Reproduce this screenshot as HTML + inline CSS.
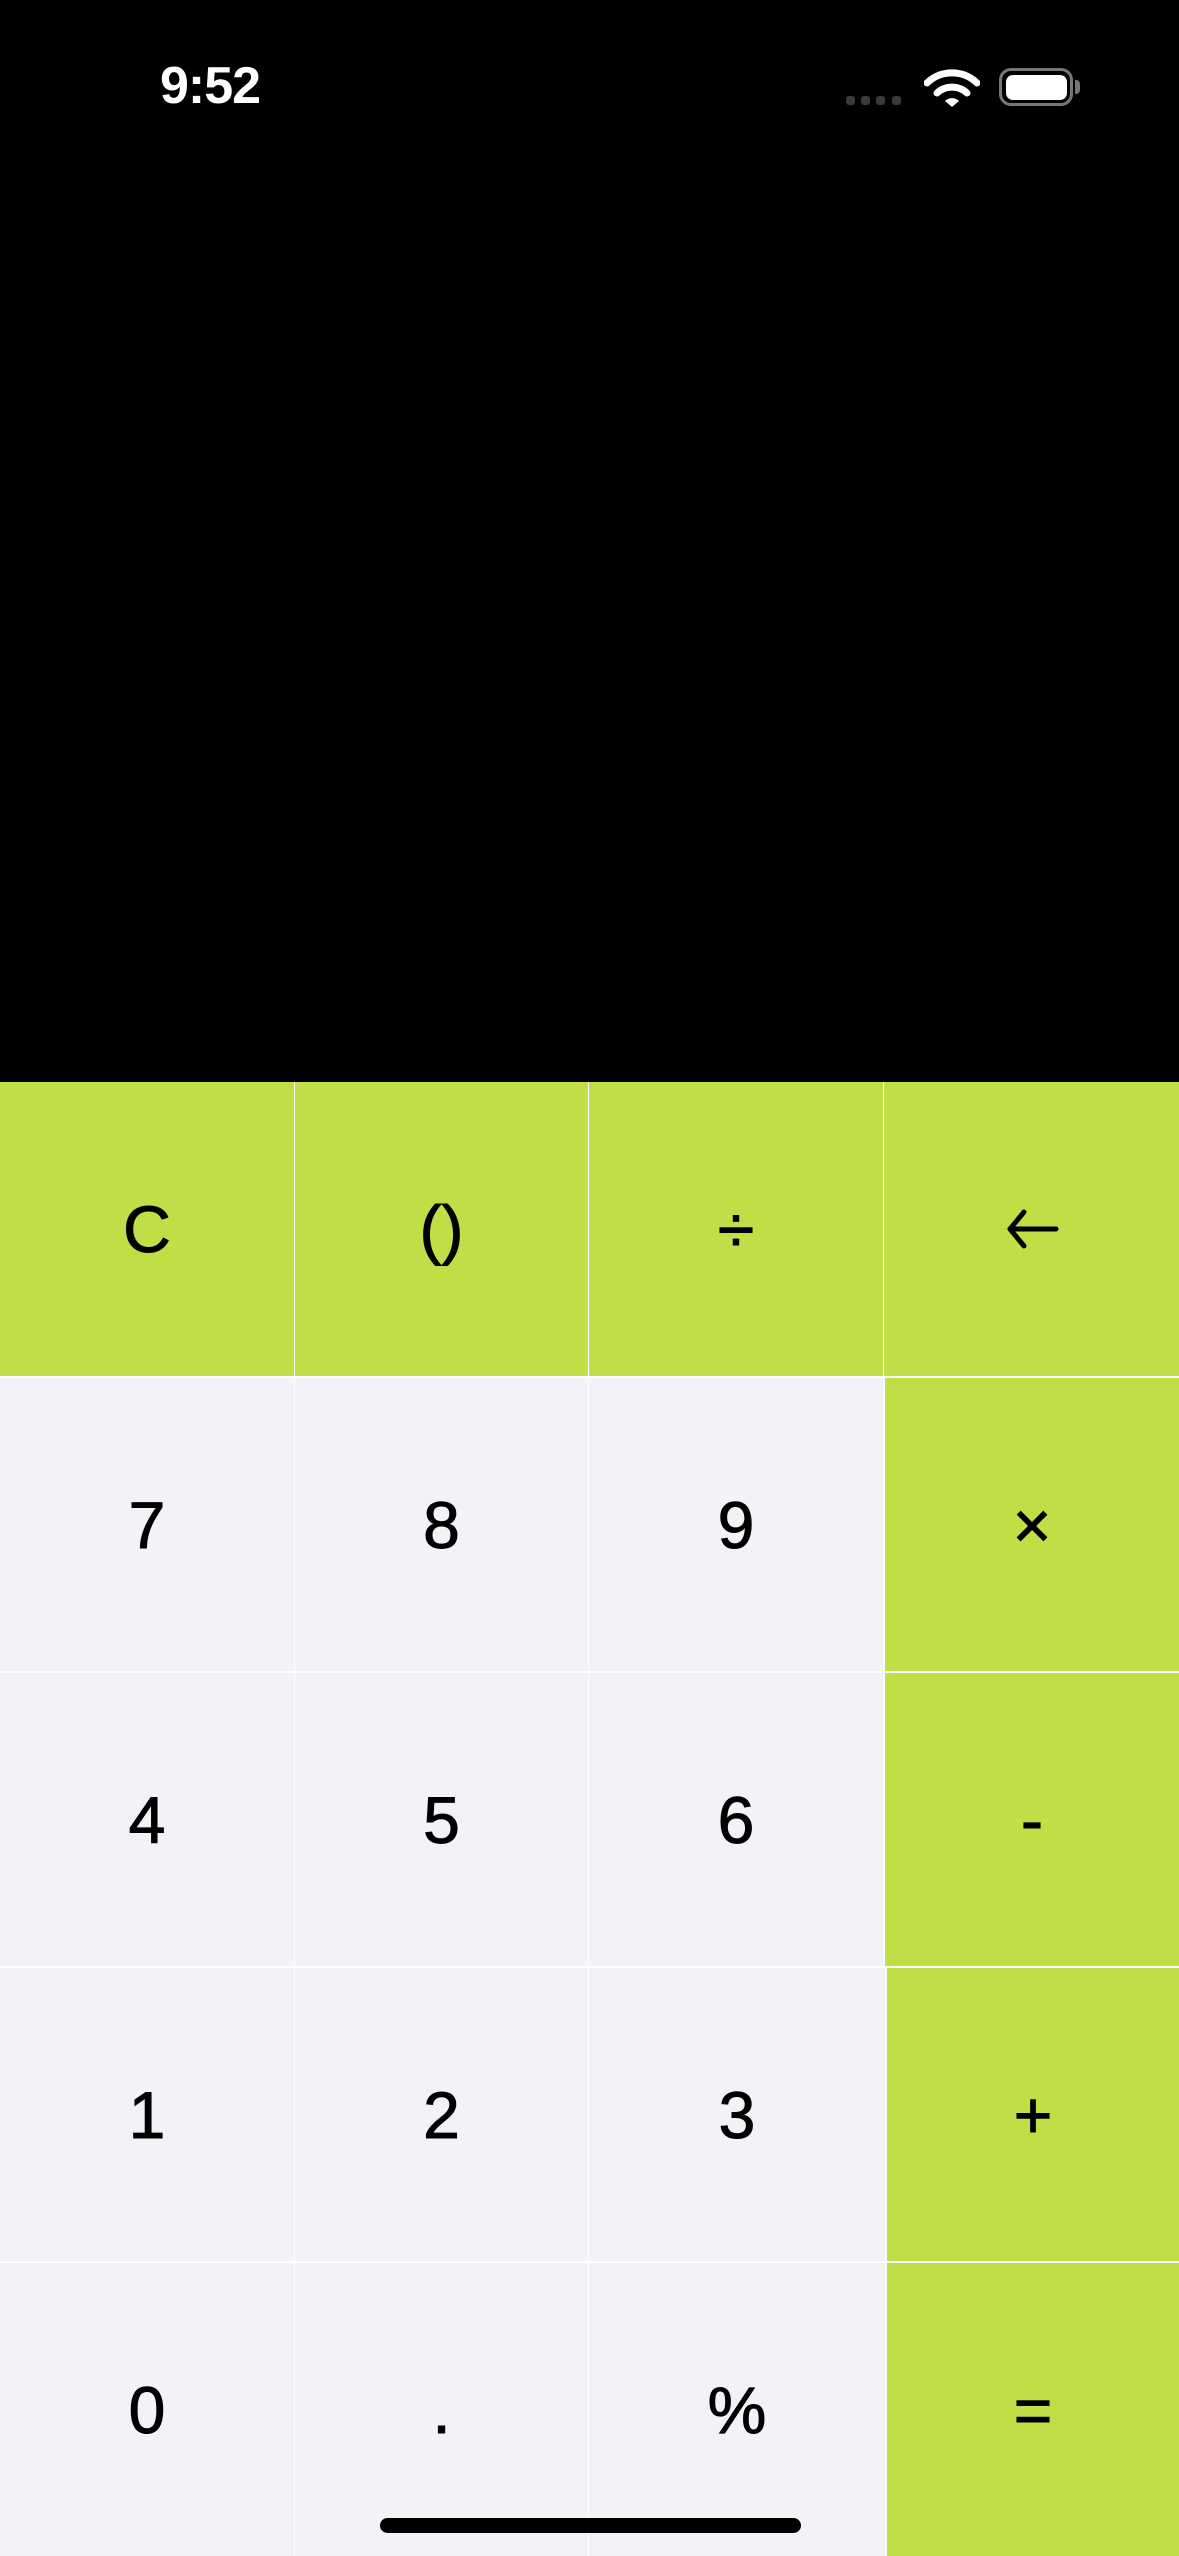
<!DOCTYPE html>
<html><head><meta charset="utf-8"><style>
*{margin:0;padding:0;box-sizing:border-box}
body{width:1179px;height:2556px;background:#000;position:relative;overflow:hidden;font-family:"Liberation Sans",Helvetica,Arial,sans-serif}
.k{position:absolute;display:flex;align-items:center;justify-content:center;font-size:66px;color:#000;-webkit-text-stroke:1px #000}
.g{background:#c0df46}
.w{background:#f2f2f7}
.time{position:absolute;left:160px;top:56px;color:#fff;font-size:52px;font-weight:bold;letter-spacing:-1px}
.dot{position:absolute;top:96px;width:9px;height:9px;border-radius:3px;background:#3a3a3a}
</style></head><body>
<div class="time">9:52</div>
<div class="dot" style="left:846px"></div>
<div class="dot" style="left:861px"></div>
<div class="dot" style="left:876px"></div>
<div class="dot" style="left:892px"></div>
<svg style="position:absolute;left:924px;top:66px" width="56" height="42" viewBox="0 0 56 42">
<path d="M3 17 A36 36 0 0 1 53 17" stroke="#fff" stroke-width="7" fill="none" stroke-linecap="round"/>
<path d="M13 27 A22 22 0 0 1 43 27" stroke="#fff" stroke-width="7" fill="none" stroke-linecap="round"/>
<path d="M21 35 L28 41 L35 35 A10 10 0 0 0 21 35Z" fill="#fff"/>
</svg>
<div style="position:absolute;left:999px;top:68px;width:74px;height:38px;border:3px solid #777;border-radius:12px"></div>
<div style="position:absolute;left:1006px;top:75px;width:61px;height:25px;background:#fff;border-radius:7px"></div>
<div style="position:absolute;left:1075px;top:80px;width:5px;height:14px;background:#777;border-radius:0 4px 4px 0"></div>

<div style="position:absolute;left:0;top:1082px;width:1179px;height:1474px;background:#fff"></div>
<div class="k g" style="left:0;top:1082px;width:294px;height:294px">C</div>
<div class="k g" style="left:295px;top:1082px;width:293px;height:294px">()</div>
<div class="k g" style="left:589px;top:1082px;width:294px;height:294px">÷</div>
<div class="k g" style="left:884px;top:1082px;width:295px;height:294px"><svg width="56" height="44" viewBox="0 0 56 44"><path d="M52 22H6M20 5L6 22L20 39" stroke="#000" stroke-width="5" fill="none" stroke-linecap="round" stroke-linejoin="round"/></svg></div>
<div class="k w" style="left:0;top:1378px;width:294px;height:293px">7</div>
<div class="k w" style="left:295px;top:1378px;width:293px;height:293px">8</div>
<div class="k w" style="left:589px;top:1378px;width:294px;height:293px">9</div>
<div class="k g" style="left:885px;top:1378px;width:294px;height:293px">×</div>
<div class="k w" style="left:0;top:1673px;width:294px;height:293px">4</div>
<div class="k w" style="left:295px;top:1673px;width:293px;height:293px">5</div>
<div class="k w" style="left:589px;top:1673px;width:294px;height:293px">6</div>
<div class="k g" style="left:885px;top:1673px;width:294px;height:293px">-</div>
<div class="k w" style="left:0;top:1968px;width:294px;height:293px">1</div>
<div class="k w" style="left:295px;top:1968px;width:293px;height:293px">2</div>
<div class="k w" style="left:589px;top:1968px;width:296px;height:293px">3</div>
<div class="k g" style="left:887px;top:1968px;width:292px;height:293px">+</div>
<div class="k w" style="left:0;top:2263px;width:294px;height:293px">0</div>
<div class="k w" style="left:295px;top:2263px;width:293px;height:293px">.</div>
<div class="k w" style="left:589px;top:2263px;width:296px;height:293px">%</div>
<div class="k g" style="left:887px;top:2263px;width:292px;height:293px">=</div>
<div style="position:absolute;left:380px;top:2518px;width:421px;height:15px;border-radius:8px;background:#000"></div>
</body></html>
